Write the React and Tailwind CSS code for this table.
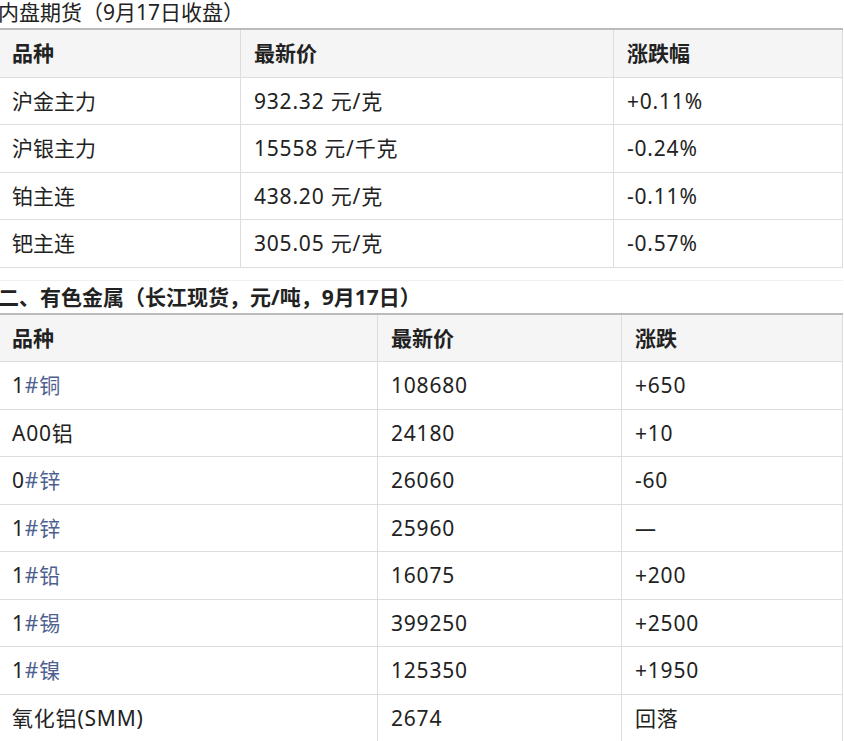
import React from "react";

const font = { fontFamily: '"Noto Sans", "Noto Sans CJK SC", sans-serif' };

const t1 = [
  ["沪金主力", "932.32 元/克", "+0.11%"],
  ["沪银主力", "15558 元/千克", "-0.24%"],
  ["铂主连", "438.20 元/克", "-0.11%"],
  ["钯主连", "305.05 元/克", "-0.57%"],
];

const t2 = [
  [["1", "#铜"], "108680", "+650"],
  [["A00铝", ""], "24180", "+10"],
  [["0", "#锌"], "26060", "-60"],
  [["1", "#锌"], "25960", "—"],
  [["1", "#铅"], "16075", "+200"],
  [["1", "#锡"], "399250", "+2500"],
  [["1", "#镍"], "125350", "+1950"],
  [["氧化铝(SMM)", ""], "2674", "回落"],
];

const th = "border border-[#ddd] bg-[#f5f5f5] text-left font-bold pl-[13px] pr-2 py-[10px] leading-[26.5px] border-t-2 border-t-[#bbb]";
const td = "border border-[#ddd] text-left pl-[13px] pr-2 py-[10px] leading-[26.5px]";
const tdn = td + " tracking-[0.8px]";

export default function App() {
  return (
    <div className="bg-white w-[844px] h-[741px] overflow-hidden text-[#222] text-[21px]" style={font}>
      <div className="ml-[-2px] w-[845px] mt-[-2px]">
        <div className="leading-[28px] mb-[2px]">内盘期货（9月17日收盘）</div>
        <table className="w-full border-collapse table-fixed">
          <thead>
            <tr>
              <th className={th + " w-[242px]"}>品种</th>
              <th className={th + " w-[373px]"}>最新价</th>
              <th className={th}>涨跌幅</th>
            </tr>
          </thead>
          <tbody>
            {t1.map((r, i) => (
              <tr key={i}>
                <td className={td}>{r[0]}</td>
                <td className={tdn}>{r[1]}</td>
                <td className={tdn}>{r[2]}</td>
              </tr>
            ))}
          </tbody>
        </table>
        <div className="mt-[12px] h-[1px] bg-[#f0f0f0]" />
        <div className="font-bold leading-[28px] mt-[2px] mb-[2px]">二、有色金属（长江现货，元/吨，9月17日）</div>
        <table className="w-full border-collapse table-fixed">
          <thead>
            <tr>
              <th className={th + " w-[379px]"}>品种</th>
              <th className={th + " w-[244px]"}>最新价</th>
              <th className={th}>涨跌</th>
            </tr>
          </thead>
          <tbody>
            {t2.map((r, i) => (
              <tr key={i}>
                <td className={tdn}>
                  {r[0][0]}
                  {r[0][1] && <span className="text-[#4f5f8f]">{r[0][1]}</span>}
                </td>
                <td className={tdn}>{r[1]}</td>
                <td className={tdn}>{r[2]}</td>
              </tr>
            ))}
          </tbody>
        </table>
      </div>
    </div>
  );
}
